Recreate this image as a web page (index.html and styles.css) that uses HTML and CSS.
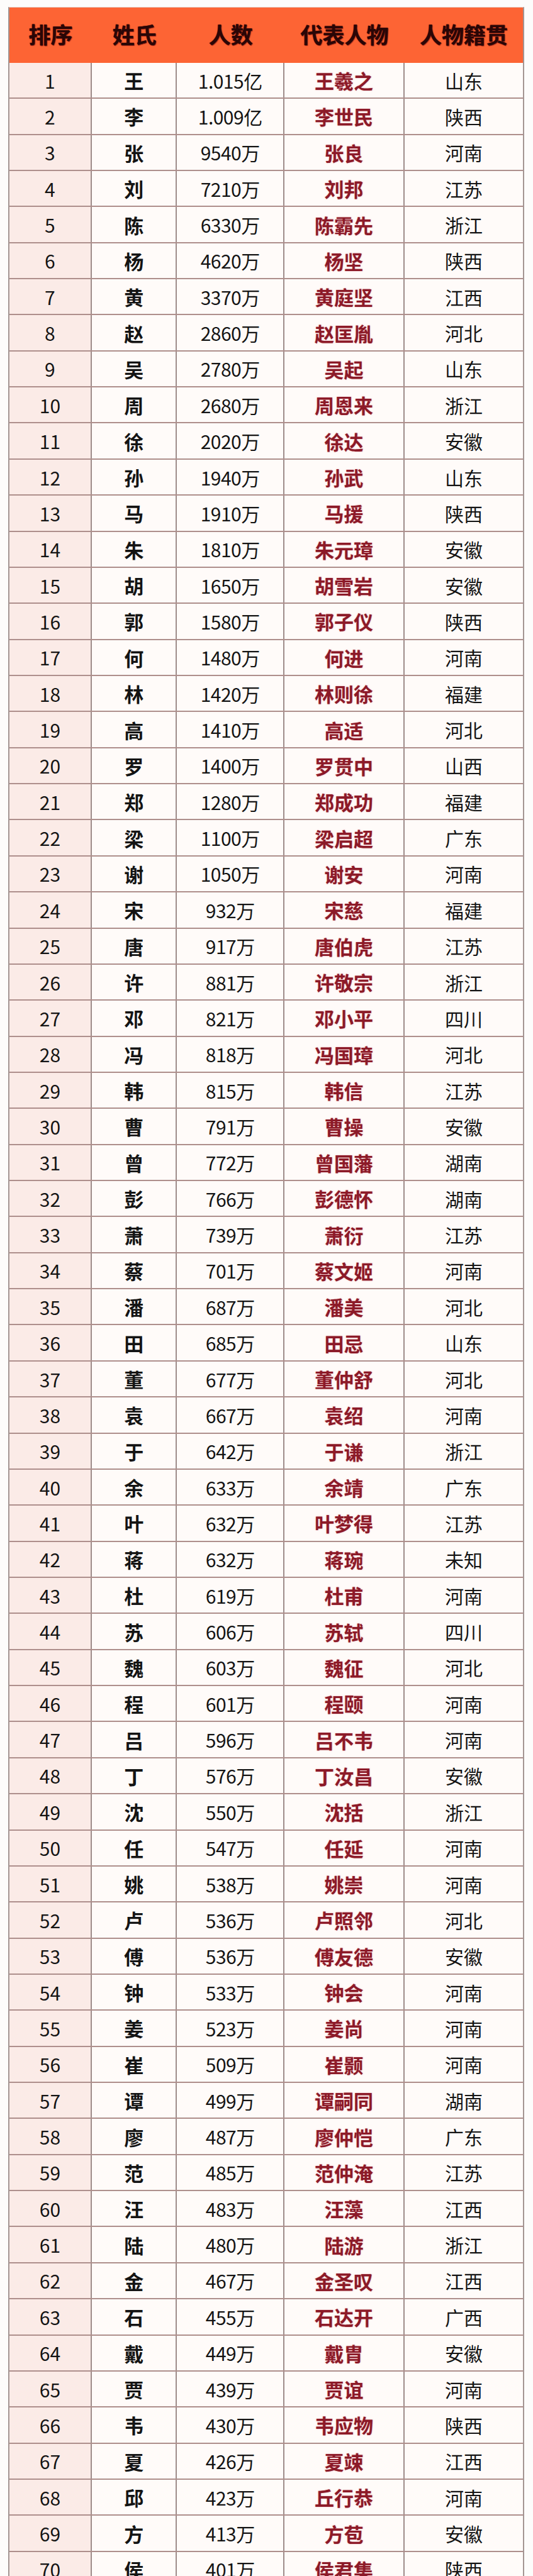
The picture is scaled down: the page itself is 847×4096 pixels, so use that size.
FILE: index.html
```html
<!DOCTYPE html>
<html lang="zh-CN">
<head>
<meta charset="utf-8">
<title>百家姓人口排名</title>
<link rel="stylesheet" href="styles.css">
</head>
<body>
<div class="sheet">
  <div class="row head">
    <div class="c">排序</div><div class="c">姓氏</div><div class="c">人数</div><div class="c">代表人物</div><div class="c">人物籍贯</div>
  </div>
  <div class="row"><div class="c rank">1</div><div class="c name">王</div><div class="c num">1.015亿</div><div class="c person">王羲之</div><div class="c place">山东</div></div>
  <div class="row"><div class="c rank">2</div><div class="c name">李</div><div class="c num">1.009亿</div><div class="c person">李世民</div><div class="c place">陕西</div></div>
  <div class="row"><div class="c rank">3</div><div class="c name">张</div><div class="c num">9540万</div><div class="c person">张良</div><div class="c place">河南</div></div>
  <div class="row"><div class="c rank">4</div><div class="c name">刘</div><div class="c num">7210万</div><div class="c person">刘邦</div><div class="c place">江苏</div></div>
  <div class="row"><div class="c rank">5</div><div class="c name">陈</div><div class="c num">6330万</div><div class="c person">陈霸先</div><div class="c place">浙江</div></div>
  <div class="row"><div class="c rank">6</div><div class="c name">杨</div><div class="c num">4620万</div><div class="c person">杨坚</div><div class="c place">陕西</div></div>
  <div class="row"><div class="c rank">7</div><div class="c name">黄</div><div class="c num">3370万</div><div class="c person">黄庭坚</div><div class="c place">江西</div></div>
  <div class="row"><div class="c rank">8</div><div class="c name">赵</div><div class="c num">2860万</div><div class="c person">赵匡胤</div><div class="c place">河北</div></div>
  <div class="row"><div class="c rank">9</div><div class="c name">吴</div><div class="c num">2780万</div><div class="c person">吴起</div><div class="c place">山东</div></div>
  <div class="row"><div class="c rank">10</div><div class="c name">周</div><div class="c num">2680万</div><div class="c person">周恩来</div><div class="c place">浙江</div></div>
  <div class="row"><div class="c rank">11</div><div class="c name">徐</div><div class="c num">2020万</div><div class="c person">徐达</div><div class="c place">安徽</div></div>
  <div class="row"><div class="c rank">12</div><div class="c name">孙</div><div class="c num">1940万</div><div class="c person">孙武</div><div class="c place">山东</div></div>
  <div class="row"><div class="c rank">13</div><div class="c name">马</div><div class="c num">1910万</div><div class="c person">马援</div><div class="c place">陕西</div></div>
  <div class="row"><div class="c rank">14</div><div class="c name">朱</div><div class="c num">1810万</div><div class="c person">朱元璋</div><div class="c place">安徽</div></div>
  <div class="row"><div class="c rank">15</div><div class="c name">胡</div><div class="c num">1650万</div><div class="c person">胡雪岩</div><div class="c place">安徽</div></div>
  <div class="row"><div class="c rank">16</div><div class="c name">郭</div><div class="c num">1580万</div><div class="c person">郭子仪</div><div class="c place">陕西</div></div>
  <div class="row"><div class="c rank">17</div><div class="c name">何</div><div class="c num">1480万</div><div class="c person">何进</div><div class="c place">河南</div></div>
  <div class="row"><div class="c rank">18</div><div class="c name">林</div><div class="c num">1420万</div><div class="c person">林则徐</div><div class="c place">福建</div></div>
  <div class="row"><div class="c rank">19</div><div class="c name">高</div><div class="c num">1410万</div><div class="c person">高适</div><div class="c place">河北</div></div>
  <div class="row"><div class="c rank">20</div><div class="c name">罗</div><div class="c num">1400万</div><div class="c person">罗贯中</div><div class="c place">山西</div></div>
  <div class="row"><div class="c rank">21</div><div class="c name">郑</div><div class="c num">1280万</div><div class="c person">郑成功</div><div class="c place">福建</div></div>
  <div class="row"><div class="c rank">22</div><div class="c name">梁</div><div class="c num">1100万</div><div class="c person">梁启超</div><div class="c place">广东</div></div>
  <div class="row"><div class="c rank">23</div><div class="c name">谢</div><div class="c num">1050万</div><div class="c person">谢安</div><div class="c place">河南</div></div>
  <div class="row"><div class="c rank">24</div><div class="c name">宋</div><div class="c num">932万</div><div class="c person">宋慈</div><div class="c place">福建</div></div>
  <div class="row"><div class="c rank">25</div><div class="c name">唐</div><div class="c num">917万</div><div class="c person">唐伯虎</div><div class="c place">江苏</div></div>
  <div class="row"><div class="c rank">26</div><div class="c name">许</div><div class="c num">881万</div><div class="c person">许敬宗</div><div class="c place">浙江</div></div>
  <div class="row"><div class="c rank">27</div><div class="c name">邓</div><div class="c num">821万</div><div class="c person">邓小平</div><div class="c place">四川</div></div>
  <div class="row"><div class="c rank">28</div><div class="c name">冯</div><div class="c num">818万</div><div class="c person">冯国璋</div><div class="c place">河北</div></div>
  <div class="row"><div class="c rank">29</div><div class="c name">韩</div><div class="c num">815万</div><div class="c person">韩信</div><div class="c place">江苏</div></div>
  <div class="row"><div class="c rank">30</div><div class="c name">曹</div><div class="c num">791万</div><div class="c person">曹操</div><div class="c place">安徽</div></div>
  <div class="row"><div class="c rank">31</div><div class="c name">曾</div><div class="c num">772万</div><div class="c person">曾国藩</div><div class="c place">湖南</div></div>
  <div class="row"><div class="c rank">32</div><div class="c name">彭</div><div class="c num">766万</div><div class="c person">彭德怀</div><div class="c place">湖南</div></div>
  <div class="row"><div class="c rank">33</div><div class="c name">萧</div><div class="c num">739万</div><div class="c person">萧衍</div><div class="c place">江苏</div></div>
  <div class="row"><div class="c rank">34</div><div class="c name">蔡</div><div class="c num">701万</div><div class="c person">蔡文姬</div><div class="c place">河南</div></div>
  <div class="row"><div class="c rank">35</div><div class="c name">潘</div><div class="c num">687万</div><div class="c person">潘美</div><div class="c place">河北</div></div>
  <div class="row"><div class="c rank">36</div><div class="c name">田</div><div class="c num">685万</div><div class="c person">田忌</div><div class="c place">山东</div></div>
  <div class="row"><div class="c rank">37</div><div class="c name">董</div><div class="c num">677万</div><div class="c person">董仲舒</div><div class="c place">河北</div></div>
  <div class="row"><div class="c rank">38</div><div class="c name">袁</div><div class="c num">667万</div><div class="c person">袁绍</div><div class="c place">河南</div></div>
  <div class="row"><div class="c rank">39</div><div class="c name">于</div><div class="c num">642万</div><div class="c person">于谦</div><div class="c place">浙江</div></div>
  <div class="row"><div class="c rank">40</div><div class="c name">余</div><div class="c num">633万</div><div class="c person">余靖</div><div class="c place">广东</div></div>
  <div class="row"><div class="c rank">41</div><div class="c name">叶</div><div class="c num">632万</div><div class="c person">叶梦得</div><div class="c place">江苏</div></div>
  <div class="row"><div class="c rank">42</div><div class="c name">蒋</div><div class="c num">632万</div><div class="c person">蒋琬</div><div class="c place">未知</div></div>
  <div class="row"><div class="c rank">43</div><div class="c name">杜</div><div class="c num">619万</div><div class="c person">杜甫</div><div class="c place">河南</div></div>
  <div class="row"><div class="c rank">44</div><div class="c name">苏</div><div class="c num">606万</div><div class="c person">苏轼</div><div class="c place">四川</div></div>
  <div class="row"><div class="c rank">45</div><div class="c name">魏</div><div class="c num">603万</div><div class="c person">魏征</div><div class="c place">河北</div></div>
  <div class="row"><div class="c rank">46</div><div class="c name">程</div><div class="c num">601万</div><div class="c person">程颐</div><div class="c place">河南</div></div>
  <div class="row"><div class="c rank">47</div><div class="c name">吕</div><div class="c num">596万</div><div class="c person">吕不韦</div><div class="c place">河南</div></div>
  <div class="row"><div class="c rank">48</div><div class="c name">丁</div><div class="c num">576万</div><div class="c person">丁汝昌</div><div class="c place">安徽</div></div>
  <div class="row"><div class="c rank">49</div><div class="c name">沈</div><div class="c num">550万</div><div class="c person">沈括</div><div class="c place">浙江</div></div>
  <div class="row"><div class="c rank">50</div><div class="c name">任</div><div class="c num">547万</div><div class="c person">任延</div><div class="c place">河南</div></div>
  <div class="row"><div class="c rank">51</div><div class="c name">姚</div><div class="c num">538万</div><div class="c person">姚崇</div><div class="c place">河南</div></div>
  <div class="row"><div class="c rank">52</div><div class="c name">卢</div><div class="c num">536万</div><div class="c person">卢照邻</div><div class="c place">河北</div></div>
  <div class="row"><div class="c rank">53</div><div class="c name">傅</div><div class="c num">536万</div><div class="c person">傅友德</div><div class="c place">安徽</div></div>
  <div class="row"><div class="c rank">54</div><div class="c name">钟</div><div class="c num">533万</div><div class="c person">钟会</div><div class="c place">河南</div></div>
  <div class="row"><div class="c rank">55</div><div class="c name">姜</div><div class="c num">523万</div><div class="c person">姜尚</div><div class="c place">河南</div></div>
  <div class="row"><div class="c rank">56</div><div class="c name">崔</div><div class="c num">509万</div><div class="c person">崔颢</div><div class="c place">河南</div></div>
  <div class="row"><div class="c rank">57</div><div class="c name">谭</div><div class="c num">499万</div><div class="c person">谭嗣同</div><div class="c place">湖南</div></div>
  <div class="row"><div class="c rank">58</div><div class="c name">廖</div><div class="c num">487万</div><div class="c person">廖仲恺</div><div class="c place">广东</div></div>
  <div class="row"><div class="c rank">59</div><div class="c name">范</div><div class="c num">485万</div><div class="c person">范仲淹</div><div class="c place">江苏</div></div>
  <div class="row"><div class="c rank">60</div><div class="c name">汪</div><div class="c num">483万</div><div class="c person">汪藻</div><div class="c place">江西</div></div>
  <div class="row"><div class="c rank">61</div><div class="c name">陆</div><div class="c num">480万</div><div class="c person">陆游</div><div class="c place">浙江</div></div>
  <div class="row"><div class="c rank">62</div><div class="c name">金</div><div class="c num">467万</div><div class="c person">金圣叹</div><div class="c place">江西</div></div>
  <div class="row"><div class="c rank">63</div><div class="c name">石</div><div class="c num">455万</div><div class="c person">石达开</div><div class="c place">广西</div></div>
  <div class="row"><div class="c rank">64</div><div class="c name">戴</div><div class="c num">449万</div><div class="c person">戴胄</div><div class="c place">安徽</div></div>
  <div class="row"><div class="c rank">65</div><div class="c name">贾</div><div class="c num">439万</div><div class="c person">贾谊</div><div class="c place">河南</div></div>
  <div class="row"><div class="c rank">66</div><div class="c name">韦</div><div class="c num">430万</div><div class="c person">韦应物</div><div class="c place">陕西</div></div>
  <div class="row"><div class="c rank">67</div><div class="c name">夏</div><div class="c num">426万</div><div class="c person">夏竦</div><div class="c place">江西</div></div>
  <div class="row"><div class="c rank">68</div><div class="c name">邱</div><div class="c num">423万</div><div class="c person">丘行恭</div><div class="c place">河南</div></div>
  <div class="row"><div class="c rank">69</div><div class="c name">方</div><div class="c num">413万</div><div class="c person">方苞</div><div class="c place">安徽</div></div>
  <div class="row"><div class="c rank">70</div><div class="c name">侯</div><div class="c num">401万</div><div class="c person">侯君集</div><div class="c place">陕西</div></div>
</div>
</body>
</html>
```
FILE: styles.css
```css
html, body {
  margin: 0;
  padding: 0;
  background: #fdfcfb;
}
body {
  font-family: "Noto Sans CJK SC", "Noto Sans", sans-serif;
  color: #141414;
  overflow: hidden;
}
.sheet {
  margin: 11px 0 0 12.7px;
  width: 820.5px;
  box-sizing: border-box;
  border-left: 2px solid #a39593;
  border-right: 2px solid #a39593;
  border-top: 1px solid #e6cfc6;
}
.row {
  display: grid;
  grid-template-columns: 131.5px 135.2px 170.7px 191px 188.1px;
  height: 57.36px;
  box-sizing: border-box;
  border-bottom: 2px solid #ae8f8c;
  background: #fffbf9;
}
.row .c {
  display: flex;
  align-items: center;
  justify-content: center;
  border-right: 2px solid #9e8c8a;
  font-size: 30px;
  line-height: 1;
  white-space: nowrap;
}
.row .c:last-child {
  border-right: none;
}
.head {
  height: 87.9px;
  background: #fd6434;
  border-bottom: none;
}
.head .c {
  border-right: none;
  font-size: 35px;
  font-weight: 700;
  color: #2a0606;
  text-shadow: 1px 1px 1px rgba(110, 10, 10, 0.65), 0 0 1px #3a0808;
  padding-bottom: 4px;
}
.rank {
  background: #fbebe7;
  font-weight: 400;
}
.name {
  font-weight: 700;
  font-size: 31px !important;
}
.num {
  font-weight: 400;
  letter-spacing: -0.5px;
}
.person {
  font-weight: 700;
  font-size: 31px !important;
  color: #8c1a28;
  text-shadow: 0 0 2px rgba(214, 90, 110, 0.55);
}
.place {
  font-weight: 400;
}
```
